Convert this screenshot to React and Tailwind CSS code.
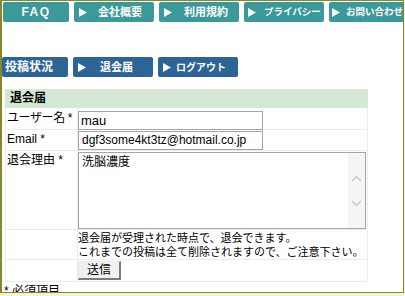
import React from "react";

const font = { fontFamily: '"Liberation Sans", "Noto Sans CJK JP", sans-serif' };

function NavBtn({ w, color, children, center }) {
  return (
    <div
      className={`h-[20px] ${w} ${color} shrink-0 rounded-[2px] flex items-center text-white font-bold whitespace-nowrap overflow-hidden ${center ? "justify-center" : ""}`}
    >
      {children}
    </div>
  );
}

function Arrow({ ml, mr }) {
  return (
    <svg width="8" height="9" viewBox="0 0 8 9" className={`${ml} ${mr} shrink-0`}>
      <path d="M0 0 L8 4.5 L0 9 Z" fill="white" />
    </svg>
  );
}

export default function App() {
  return (
    <div className="w-[405px] h-[296px] bg-[#f3f2d8] overflow-hidden" style={font}>
      <div className="w-[404px] h-[293px] bg-white border-l-2 border-r border-b border-t border-[#8a8826] overflow-hidden flex flex-col">
        {/* top nav */}
        <div className="flex gap-[5px] pt-[1px] pl-[1px]">
          <NavBtn w="w-[66px]" color="bg-[#3b9999]" center>
            <span className="tracking-[1.5px] text-[12px]">FAQ</span>
          </NavBtn>
          <NavBtn w="w-[80px]" color="bg-[#3b9999]">
            <Arrow ml="ml-[5px]" mr="mr-[11px]" />
            <span className="text-[11px]">会社概要</span>
          </NavBtn>
          <NavBtn w="w-[80px]" color="bg-[#3b9999]">
            <Arrow ml="ml-[5px]" mr="mr-[12px]" />
            <span className="text-[11px]">利用規約</span>
          </NavBtn>
          <NavBtn w="w-[80px]" color="bg-[#3b9999]">
            <Arrow ml="ml-[4px]" mr="mr-[8px]" />
            <span className="text-[9.5px]">プライバシー</span>
          </NavBtn>
          <NavBtn w="w-[77px]" color="bg-[#3b9999]">
            <Arrow ml="ml-[3px]" mr="mr-[6px]" />
            <span className="text-[9.5px]">お問い合わせ</span>
          </NavBtn>
        </div>

        {/* second nav */}
        <div className="flex gap-[5px] mt-[35px]">
          <NavBtn w="w-[66px]" color="bg-[#2c6495]">
            <span className="pl-[3px] text-[12px]">投稿状況</span>
          </NavBtn>
          <NavBtn w="w-[80px]" color="bg-[#2c6495]">
            <Arrow ml="ml-[5px]" mr="mr-[14px]" />
            <span className="text-[11px]">退会届</span>
          </NavBtn>
          <NavBtn w="w-[80px]" color="bg-[#2c6495]">
            <Arrow ml="ml-[5px]" mr="mr-[5px]" />
            <span className="text-[10px]">ログアウト</span>
          </NavBtn>
        </div>

        {/* form table */}
        <div className="ml-[3px] mt-[12px] w-[363px] text-[12px] text-black leading-[15px]">
          <div className="h-[19px] bg-[#d5e8d4] font-bold flex items-center pl-[5px] text-[12px]">退会届</div>
          <div className="flex h-[22px] border-b border-[#ececec]">
            <div className="w-[72px] shrink-0 pl-[1px] pt-[3px] border-l border-[#ececec] whitespace-nowrap tracking-[-0.4px]">ユーザー名 *</div>
            <div className="flex-1 pt-[3px] border-l border-r border-[#ececec]">
              <div className="w-[185px] h-[19px] border border-[#a5a5a5] px-[2px] flex items-center text-[13px]">mau</div>
            </div>
          </div>
          <div className="flex h-[21px] border-b border-[#ececec]">
            <div className="w-[72px] shrink-0 pl-[1px] pt-[2px] border-l border-[#ececec]">Email *</div>
            <div className="flex-1 pt-[1px] border-l border-r border-[#ececec]">
              <div className="w-[185px] h-[19px] border border-[#a5a5a5] px-[3px] flex items-center">dgf3some4kt3tz@hotmail.co.jp</div>
            </div>
          </div>
          <div className="flex h-[79px] border-b border-[#ececec]">
            <div className="w-[72px] shrink-0 pl-[1px] pt-[2px] border-l border-[#ececec]">退会理由 *</div>
            <div className="flex-1 pt-[1px] border-l border-r border-[#ececec]">
              <div className="w-[288px] h-[77px] border border-[#a5a5a5] flex">
                <div className="flex-1 px-[3px] pt-[2px]">洗脳濃度</div>
                <div className="w-[17px] bg-[#f5f5f5] flex flex-col items-center justify-center gap-[18px]">
                  <svg width="11" height="7" viewBox="0 0 11 7"><path d="M1 6 L5.5 1.5 L10 6" fill="none" stroke="#c4c4c4" strokeWidth="1.3" /></svg>
                  <svg width="11" height="7" viewBox="0 0 11 7"><path d="M1 1 L5.5 5.5 L10 1" fill="none" stroke="#c4c4c4" strokeWidth="1.3" /></svg>
                </div>
              </div>
            </div>
          </div>
          <div className="flex h-[30px] border-b border-[#ececec]">
            <div className="w-[72px] shrink-0 border-l border-[#ececec]"></div>
            <div className="flex-1 pt-[1px] border-l border-r border-[#ececec] text-[11px] leading-[14px] whitespace-nowrap">
              <div>退会届が受理された時点で、退会できます。</div>
              <div>これまでの投稿は全て削除されますので、ご注意下さい。</div>
            </div>
          </div>
          <div className="flex h-[22px] border-b border-[#ececec]">
            <div className="w-[72px] shrink-0 border-l border-[#ececec]"></div>
            <div className="flex-1 pt-[1px] border-l border-r border-[#ececec]">
              <div className="w-[43px] h-[19px] bg-[#f0f0f0] border-t border-l border-[#e8e8e8] border-r-2 border-b-2 border-r-[#7a7a7a] border-b-[#7a7a7a] flex items-center justify-center">送信</div>
            </div>
          </div>
          <div className="pt-[2px] -ml-[1px]">* 必須項目</div>
        </div>
      </div>
    </div>
  );
}
